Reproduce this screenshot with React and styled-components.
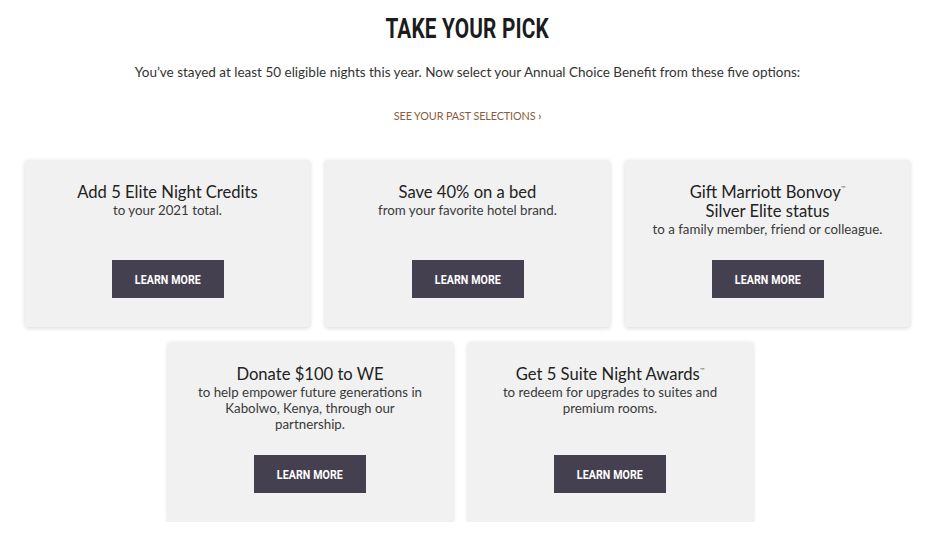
import React from "react";
import styled, { createGlobalStyle } from "styled-components";

const GlobalStyle = createGlobalStyle`
	html, body {
		margin: 0;
		padding: 0;
		background: #ffffff;
	}
	body {
		font-family: "Lato", "Open Sans", sans-serif;
		color: #333333;
	}
`;

const offers = [
	{
		title: ["Add 5 Elite Night Credits"],
		body: "to your 2021 total.",
	},
	{
		title: ["Save 40% on a bed"],
		body: "from your favorite hotel brand.",
	},
	{
		title: ["Gift Marriott Bonvoy", "Silver Elite status"],
		tm: 0,
		body: "to a family member, friend or colleague.",
	},
	{
		title: ["Donate $100 to WE"],
		body: "to help empower future generations in Kabolwo, Kenya, through our partnership.",
	},
	{
		title: ["Get 5 Suite Night Awards"],
		tm: 0,
		body: "to redeem for upgrades to suites and premium rooms.",
	},
];

const OfferCard = ({ offer }) => (
	<Card>
		<CardText>
			<CardTitle>
				{offer.title.map((line, i) => (
					<span key={i}>
						{line}
						{offer.tm === i && <Tm>™</Tm>}
					</span>
				))}
			</CardTitle>
			<CardBody>{offer.body}</CardBody>
		</CardText>
		<LearnButton>
			<Condensed>LEARN MORE</Condensed>
		</LearnButton>
	</Card>
);

const App = () => {
	return (
		<Page>
			<GlobalStyle />
			<Heading>
				<Condensed $scale={0.77}>TAKE YOUR PICK</Condensed>
			</Heading>
			<Intro>
				You’ve stayed at least 50 eligible nights this year. Now select your
				Annual Choice Benefit from these five options:
			</Intro>
			<PastLink href="#">
				SEE YOUR PAST SELECTIONS <Chevron>›</Chevron>
			</PastLink>

			<Grid>
				<Row>
					{offers.slice(0, 3).map((o, i) => (
						<OfferCard key={i} offer={o} />
					))}
				</Row>
				<Row $shift>
					{offers.slice(3).map((o, i) => (
						<OfferCard key={i} offer={o} />
					))}
				</Row>
			</Grid>
		</Page>
	);
};

export default App;

const Page = styled.div`
	width: 935px;
	display: flex;
	flex-direction: column;
	align-items: center;
	padding-top: 14px;
`;

// no condensed face is installed, so squeeze a bold grotesque instead
const Condensed = styled.span`
	display: inline-block;
	transform: scaleX(${(p) => p.$scale || 0.85});
	transform-origin: center;
`;

const Heading = styled.h1`
	margin: 0;
	font: bold 27px/30px Roboto, "Liberation Sans", sans-serif;
	letter-spacing: 0.2px;
	color: #1c1c1c;
`;

const Intro = styled.p`
	margin: 19px 0 0;
	font-size: 13.5px;
	line-height: 18px;
	color: #333333;
`;

const PastLink = styled.a`
	margin-top: 28px;
	font-size: 10.8px;
	line-height: 14px;
	color: #8a5c3a;
	text-decoration: none;
	letter-spacing: -0.1px;
`;

const Chevron = styled.span`
	font-weight: bold;
`;

const Grid = styled.div`
	margin-top: 37px;
	display: flex;
	flex-direction: column;
	gap: 15px;
`;

const Row = styled.div`
	display: flex;
	justify-content: center;
	gap: 15px;
	padding-right: ${(p) => (p.$shift ? "15px" : "0")};
`;

const Card = styled.div`
	width: 285px;
	min-height: 167px;
	box-sizing: border-box;
	padding: 23px 16px 29px;
	background: #f1f1f1;
	border-radius: 3px;
	box-shadow: 0 1px 4px rgba(0, 0, 0, 0.16);
	display: flex;
	flex-direction: column;
	align-items: center;
	text-align: center;
`;

const CardText = styled.div`
	display: flex;
	flex-direction: column;
	align-items: center;
	margin-bottom: 23px;
`;

const CardTitle = styled.div`
	display: flex;
	flex-direction: column;
	font-size: 16.6px;
	line-height: 19px;
	color: #222222;
`;

const Tm = styled.sup`
	font-size: 6px;
	vertical-align: top;
	line-height: 10px;
	color: #666666;
`;

const CardBody = styled.div`
	max-width: 236px;
	font-size: 13.3px;
	line-height: 16px;
	color: #3a3a3a;
`;

const LearnButton = styled.button`
	margin-top: auto;
	width: 112px;
	height: 38px;
	padding: 0;
	border: none;
	background: #45404f;
	color: #ffffff;
	font: bold 12.5px Roboto, "Liberation Sans", sans-serif;
	letter-spacing: 0.1px;
	cursor: pointer;
`;
